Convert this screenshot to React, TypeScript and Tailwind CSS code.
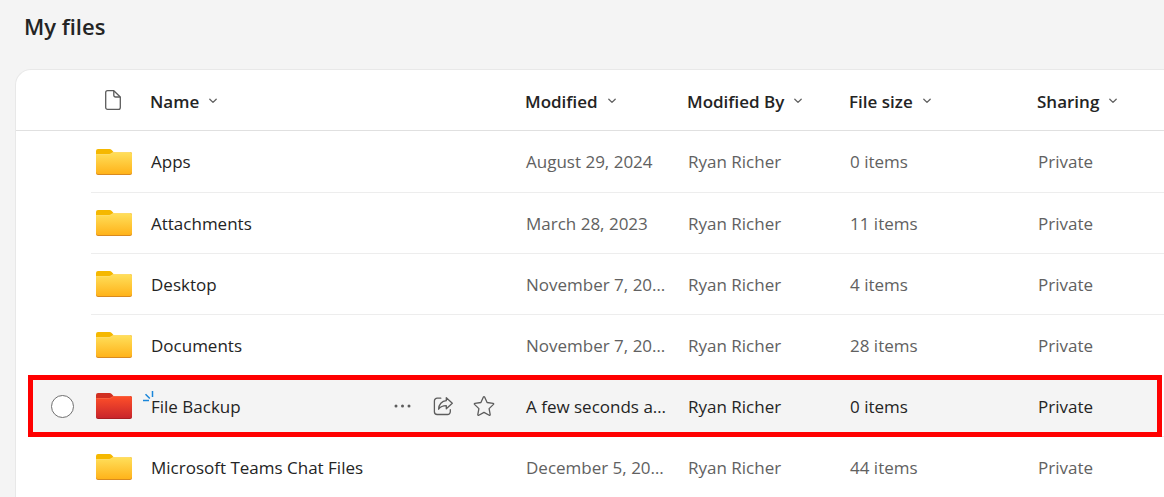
import { useState } from 'react';

interface FileRow {
  name: string;
  modified: string;
  modifiedBy: string;
  size: string;
  sharing: string;
  color: 'yellow' | 'red';
  isNew?: boolean;
}

const FILES: FileRow[] = [
  { name: 'Apps', modified: 'August 29, 2024', modifiedBy: 'Ryan Richer', size: '0 items', sharing: 'Private', color: 'yellow' },
  { name: 'Attachments', modified: 'March 28, 2023', modifiedBy: 'Ryan Richer', size: '11 items', sharing: 'Private', color: 'yellow' },
  { name: 'Desktop', modified: 'November 7, 2023', modifiedBy: 'Ryan Richer', size: '4 items', sharing: 'Private', color: 'yellow' },
  { name: 'Documents', modified: 'November 7, 2023', modifiedBy: 'Ryan Richer', size: '28 items', sharing: 'Private', color: 'yellow' },
  { name: 'File Backup', modified: 'A few seconds ago', modifiedBy: 'Ryan Richer', size: '0 items', sharing: 'Private', color: 'red', isNew: true },
  { name: 'Microsoft Teams Chat Files', modified: 'December 5, 2023', modifiedBy: 'Ryan Richer', size: '44 items', sharing: 'Private', color: 'yellow' },
];

const COLUMNS = ['Name', 'Modified', 'Modified By', 'File size', 'Sharing'];

const FOLDER_COLORS = {
  yellow: { tab: '#f5b800', top: '#ffe05c', bottom: '#ffb31a', edge: '#d98a1f', lip: '#ffdc66' },
  red: { tab: '#d13022', top: '#ff5029', bottom: '#c9252b', edge: '#a81e22', lip: '#f8603f' },
};

const FolderIcon: React.FC<{ color: 'yellow' | 'red' }> = ({ color }) => {
  const c = FOLDER_COLORS[color];
  return (
    <svg width="36" height="26" viewBox="0 0 36 26" className="block" aria-hidden="true">
      <defs>
        <linearGradient id={`folder-${color}`} x1="0" y1="0" x2="0" y2="1">
          <stop offset="0" stopColor={c.top} />
          <stop offset="1" stopColor={c.bottom} />
        </linearGradient>
      </defs>
      <path d="M0 2a2 2 0 0 1 2-2h11.500a3 3 0 0 1 2.200 1l1.800 2v3H0z" fill={c.tab} />
      <path d="M0 5.500h13.200a3 3 0 0 0 2-.8l1-.9A3 3 0 0 1 18.200 3H34a2 2 0 0 1 2 2v19a2 2 0 0 1-2 2H2a2 2 0 0 1-2-2z" fill={c.edge} />
      <path d="M0 5h13.200a3 3 0 0 0 2-.8l1-.6A3 3 0 0 1 18.200 3H34a2 2 0 0 1 2 2v18a2 2 0 0 1-2 2H2a2 2 0 0 1-2-2z" fill={`url(#folder-${color})`} />
      <path d="M.5 5.500h12.900a3 3 0 0 0 2-.8l1-.6a3 3 0 0 1 1.800-.6H34" fill="none" stroke={c.lip} />
    </svg>
  );
};

const FileIcon = () => (
  <svg width="16" height="20" viewBox="0 0 16 20" fill="none" stroke="#5c5c5c" strokeWidth="1.300" strokeLinejoin="round" aria-hidden="true">
    <path d="M2.600.7h6.200L15.300 7v10.400a1.900 1.900 0 0 1-1.900 1.900H2.600A1.900 1.900 0 0 1 .7 17.400V2.600A1.900 1.900 0 0 1 2.600.7z" />
    <path d="M8.800.9v4.300A1.800 1.800 0 0 0 10.600 7h4.500" />
  </svg>
);

const ChevronIcon = () => (
  <svg width="8" height="6" viewBox="0 0 8 6" className="mb-0.5" fill="none" stroke="#616161" strokeWidth="1.300" strokeLinecap="round" strokeLinejoin="round" aria-hidden="true">
    <path d="M.8 1.200 4 4.400l3.200-3.200" />
  </svg>
);

const MoreIcon = () => (
  <svg width="20" height="20" viewBox="0 0 20 20" fill="#5c5c5c" aria-hidden="true">
    <circle cx="3" cy="9" r="1.500" />
    <circle cx="9.500" cy="9" r="1.500" />
    <circle cx="16" cy="9" r="1.500" />
  </svg>
);

const ShareIcon = () => (
  <svg width="20" height="20" viewBox="0 0 20 20" fill="none" stroke="#5c5c5c" strokeWidth="1.300" strokeLinecap="round" strokeLinejoin="round" aria-hidden="true">
    <path d="M7.800 1.200H4.200A2.800 2.800 0 0 0 1.400 4v10.700a2.800 2.800 0 0 0 2.800 2.800h10.300a2.800 2.800 0 0 0 2.800-2.800v-2" />
    <path d="M13.300.7 19.300 6.200l-6 5.500V8.700c-3.400 0-5.900 1-7.700 3.500.1-4.900 3.300-8.300 7.700-8.500z" />
  </svg>
);

const StarIcon = () => (
  <svg width="22" height="22" viewBox="0 0 22 22" fill="none" stroke="#5c5c5c" strokeWidth="1.300" strokeLinejoin="round" aria-hidden="true">
    <path d="M10.400 1a.7.7 0 0 1 1.200 0l2.500 5.500 6 .8c.6.1.8.7.4 1.100l-4.400 4.200 1.100 6c.1.600-.5 1-1 .7L11 16.400l-5.200 2.900c-.5.300-1.100-.1-1-.7l1.100-6L1.500 8.400c-.4-.4-.2-1 .4-1.100l6-.8z" />
  </svg>
);

// small blue "new item" mark above the name
const SparkIcon = () => (
  <svg width="11" height="11" viewBox="0 0 11 11" fill="none" stroke="#1a86d9" strokeWidth="1.500" className="absolute -top-1 -left-2" aria-hidden="true">
    <path d="M9.500 0v6M2.500 3.200l4.300 4.300M0 9.500h6" />
  </svg>
);

export default function App() {
  const [checked, setChecked] = useState(false);

  return (
    <div className="min-h-screen overflow-hidden bg-[#f4f4f4] font-['Segoe_UI','Open_Sans',sans-serif] text-[#242424]">
      <h1 className="px-6 pt-3 pb-[29px] text-[22px] leading-7 font-semibold">My files</h1>
      <main className="ml-[15px] rounded-tl-2xl border-t border-l border-[#e8e8e8] bg-white">
        <table className="w-full table-fixed border-separate border-spacing-0 text-left text-[17px] leading-6">
          <colgroup>
            <col className="w-[75px]" />
            <col className="w-[59px]" />
            <col />
            <col className="w-[162px]" />
            <col className="w-[162px]" />
            <col className="w-[188px]" />
            <col className="w-[127px]" />
          </colgroup>
          <thead>
            <tr className="h-[61px]">
              <th className="border-b border-[#e0e0e0]" />
              <th className="border-b border-[#e0e0e0] pl-[14px]">
                <FileIcon />
              </th>
              {COLUMNS.map((column) => (
                <th key={column} className="border-b border-[#e0e0e0] p-0 font-semibold">
                  <button type="button" className="flex items-center gap-2.5 pt-1 whitespace-nowrap">
                    {column}
                    <ChevronIcon />
                  </button>
                </th>
              ))}
            </tr>
          </thead>
          <tbody>
            {FILES.map((file, index) => {
              const line = file.isNew ? 'border-t border-transparent' : 'border-t border-[#ededed]';
              const border = index > 0 ? line : '';
              const text = file.isNew ? 'text-[#242424]' : 'text-[#616161]';
              return (
                <tr key={file.name} className={`h-[61px] ${file.isNew ? 'relative z-0' : ''}`}>
                  <td className={`p-0 ${file.isNew ? 'pt-px' : ''}`}>
                    {file.isNew && (
                      <>
                        <span className="pointer-events-none absolute top-0 right-0.5 -bottom-px left-3 -z-10 border-5 border-[#ff0000] bg-[#f4f4f4]" />
                        <input
                          type="checkbox"
                          aria-label={`Select ${file.name}`}
                          checked={checked}
                          onChange={(e) => setChecked(e.target.checked)}
                          className="ml-[35px] block size-[23px] appearance-none rounded-full border border-[#707070] bg-white checked:bg-[#0f6cbd]"
                        />
                      </>
                    )}
                  </td>
                  <td className={`p-0 pl-[5px] ${border}`}>
                    <FolderIcon color={file.color} />
                  </td>
                  <td className={`p-0 pt-px pl-px ${border}`}>
                    <div className="flex items-center justify-between">
                      <a href="#" className="relative whitespace-nowrap">
                        {file.isNew && <SparkIcon />}
                        {file.name}
                      </a>
                      {file.isNew && (
                        <div className="flex items-center gap-5 pr-[30px]">
                          <button type="button" aria-label="More actions"><MoreIcon /></button>
                          <button type="button" aria-label="Share"><ShareIcon /></button>
                          <button type="button" aria-label="Favorite"><StarIcon /></button>
                        </div>
                      )}
                    </div>
                  </td>
                  <td className={`truncate p-0 pt-px pr-5 pl-px ${border} ${text}`}>{file.modified}</td>
                  <td className={`truncate p-0 pt-px pl-px ${border} ${text}`}>{file.modifiedBy}</td>
                  <td className={`truncate p-0 pt-px pl-px ${border} ${text}`}>{file.size}</td>
                  <td className={`truncate p-0 pt-px pl-px ${border} ${text}`}>{file.sharing}</td>
                </tr>
              );
            })}
          </tbody>
        </table>
      </main>
    </div>
  );
}
